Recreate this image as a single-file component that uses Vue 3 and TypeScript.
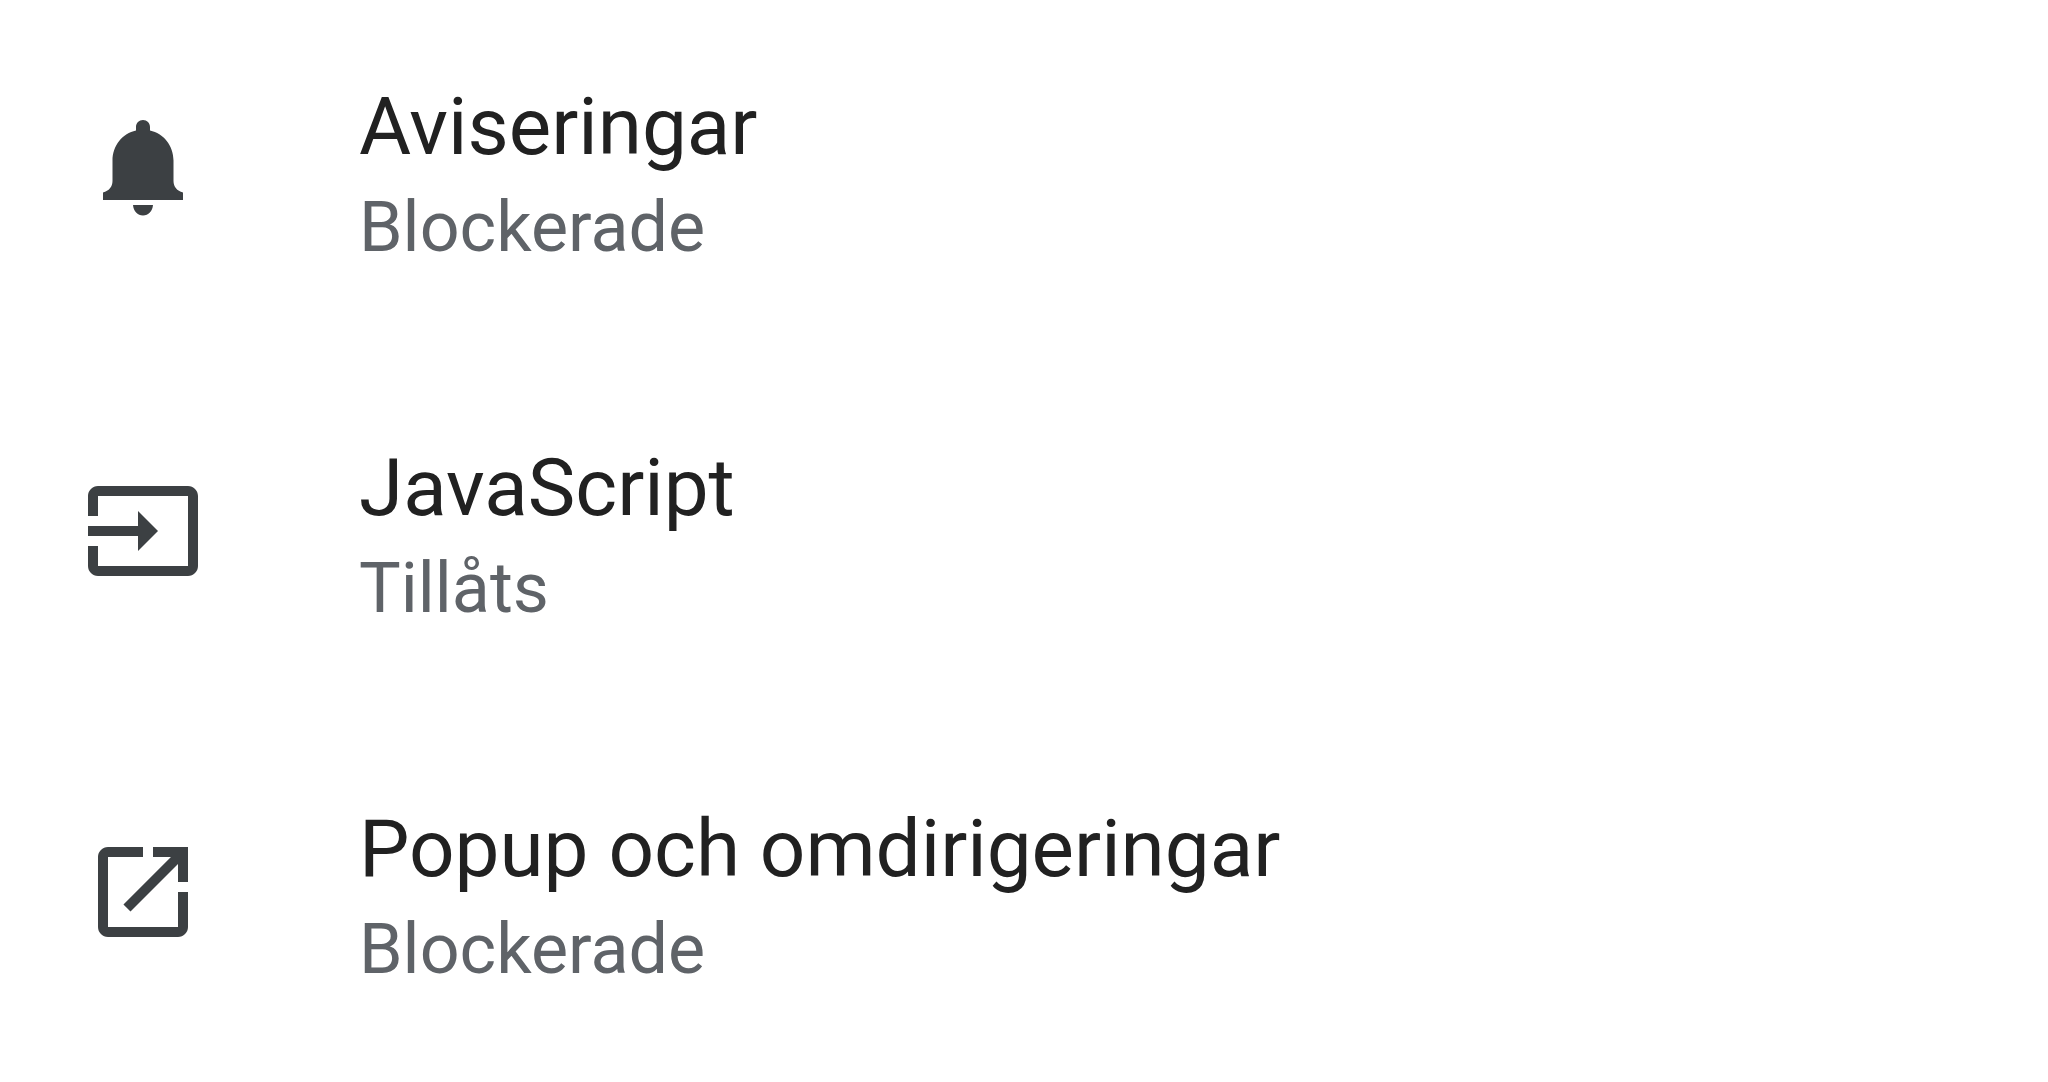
<script setup lang="ts">
interface Setting {
  title: string
  status: string
  icon: string
}

const settings: Setting[] = [
  {
    title: 'Aviseringar',
    status: 'Blockerade',
    icon: 'M10 19h4c-.1 1.2-.9 2.1-2 2.1s-1.9-.9-2-2.1zM12 2c-.8 0-1.4.6-1.4 1.4v.7C7.9 4.7 5.9 7.1 5.9 10.1v4.1c0 1.1-.7 2-1.9 2.3V18h16v-1.5c-1.2-.3-1.9-1.2-1.9-2.3v-4.1c0-3-2-5.4-4.7-6v-.7C13.4 2.6 12.8 2 12 2z',
  },
  {
    title: 'JavaScript',
    status: 'Tillåts',
    icon: 'M21 3H3c-1.1 0-2 .9-2 2v4h2V5h18v14H3v-4H1v4c0 1.1.9 2 2 2h18c1.1 0 2-.9 2-2V5c0-1.1-.9-2-2-2zM11 16l4-4-4-4v3H1v2h10v3z',
  },
  {
    title: 'Popup och omdirigeringar',
    status: 'Blockerade',
    icon: 'M19 19H5V5h7V3H5c-1.1 0-2 .9-2 2v14c0 1.1.9 2 2 2h14c1.1 0 2-.9 2-2v-7h-2v7zM14 3v2h3.59l-9.5 9.5 1.41 1.41L19 6.41V10h2V3h-7z',
  },
]
</script>

<template>
  <ul class="settings">
    <li v-for="item in settings" :key="item.title" class="row">
      <svg class="icon" viewBox="0 0 24 24" aria-hidden="true">
        <path :d="item.icon" />
      </svg>
      <div class="text">
        <div class="title">{{ item.title }}</div>
        <div class="status">{{ item.status }}</div>
      </div>
    </li>
  </ul>
</template>

<style>
body {
  margin: 0;
  background: #fff;
}
</style>

<style scoped>
.settings {
  margin: 0;
  padding: 80px 83px;
  list-style: none;
  display: flex;
  flex-direction: column;
  gap: 181px;
  font-family: Roboto, sans-serif;
}
.row {
  display: flex;
  align-items: center;
  gap: 156px;
}
.icon {
  width: 120px;
  height: 120px;
  flex: none;
  fill: #3c4043;
}
.text {
  display: flex;
  flex-direction: column;
  gap: 20px;
}
.title {
  font-size: 80px;
  line-height: 94px;
  color: #212121;
}
.status {
  font-size: 70px;
  line-height: 66px;
  color: #5f6368;
}
</style>
